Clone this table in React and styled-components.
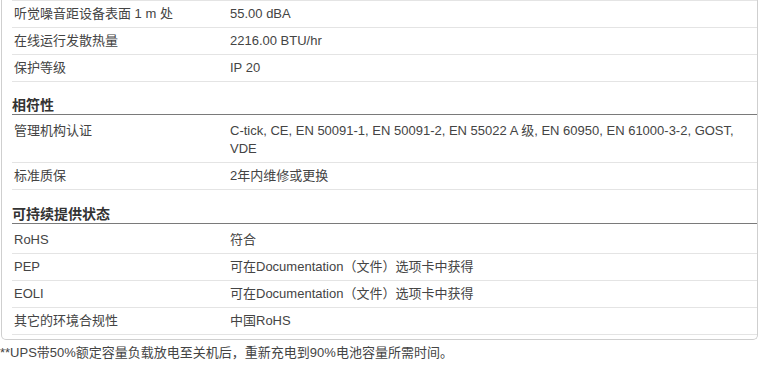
import styled, { createGlobalStyle } from 'styled-components';

const GlobalStyle = createGlobalStyle`
    body {
        margin: 0;
        background: #fff;
        font-family: "Liberation Sans", Arial, "Noto Sans CJK SC", sans-serif;
        font-size: 13px;
        color: #444;
    }
`;

const Panel = styled.div`
    box-sizing: border-box;
    width: 757px;
    margin-left: 1px;
    padding: 0 0 4px 10px;
    border: 1px solid #cfcfcf;
    border-top: none;
    border-radius: 0 0 5px 5px;
`;

const SectionTitle = styled.div`
    padding: ${p => (p.$later ? '16px' : '15px')} 0 1px 0;
    font-size: 14px;
    font-weight: bold;
    line-height: 16px;
    color: #333;
    border-bottom: 1px solid #7a7a7a;
`;

const Row = styled.div`
    display: grid;
    grid-template-columns: 216px 1fr;
    padding: ${p => (p.$first ? '7px' : '4px')} 0 4px 2px;
    line-height: 18px;
    border-top: ${p => (p.$top ? '1px solid #e4e4e4' : 'none')};
    border-bottom: 1px solid #e4e4e4;
`;

const Label = styled.div``;

const Value = styled.div`
    padding-right: 20px;
`;

const Footnote = styled.div`
    padding-top: 4px;
    line-height: 18px;
    color: #444;
`;

const top = [
    ['听觉噪音距设备表面 1 m 处', '55.00 dBA'],
    ['在线运行发散热量', '2216.00 BTU/hr'],
    ['保护等级', 'IP 20'],
];

const sections = [
    {
        title: '相符性',
        rows: [
            ['管理机构认证', 'C-tick, CE, EN 50091-1, EN 50091-2, EN 55022 A 级, EN 60950, EN 61000-3-2, GOST, VDE'],
            ['标准质保', '2年内维修或更换'],
        ],
    },
    {
        title: '可持续提供状态',
        rows: [
            ['RoHS', '符合'],
            ['PEP', '可在Documentation（文件）选项卡中获得'],
            ['EOLI', '可在Documentation（文件）选项卡中获得'],
            ['其它的环境合规性', '中国RoHS'],
        ],
    },
];

export default function App() {
    return (
        <>
            <GlobalStyle />
            <Panel>
                {top.map(([k, v], i) => (
                    <Row key={k} $top={i === 0}>
                        <Label>{k}</Label>
                        <Value>{v}</Value>
                    </Row>
                ))}
                {sections.map((s, n) => (
                    <div key={s.title}>
                        <SectionTitle $later={n > 0}>{s.title}</SectionTitle>
                        {s.rows.map(([k, v], i) => (
                            <Row key={k} $first={i === 0}>
                                <Label>{k}</Label>
                                <Value>{v}</Value>
                            </Row>
                        ))}
                    </div>
                ))}
            </Panel>
            <Footnote>**UPS带50%额定容量负载放电至关机后，重新充电到90%电池容量所需时间。</Footnote>
        </>
    );
}
